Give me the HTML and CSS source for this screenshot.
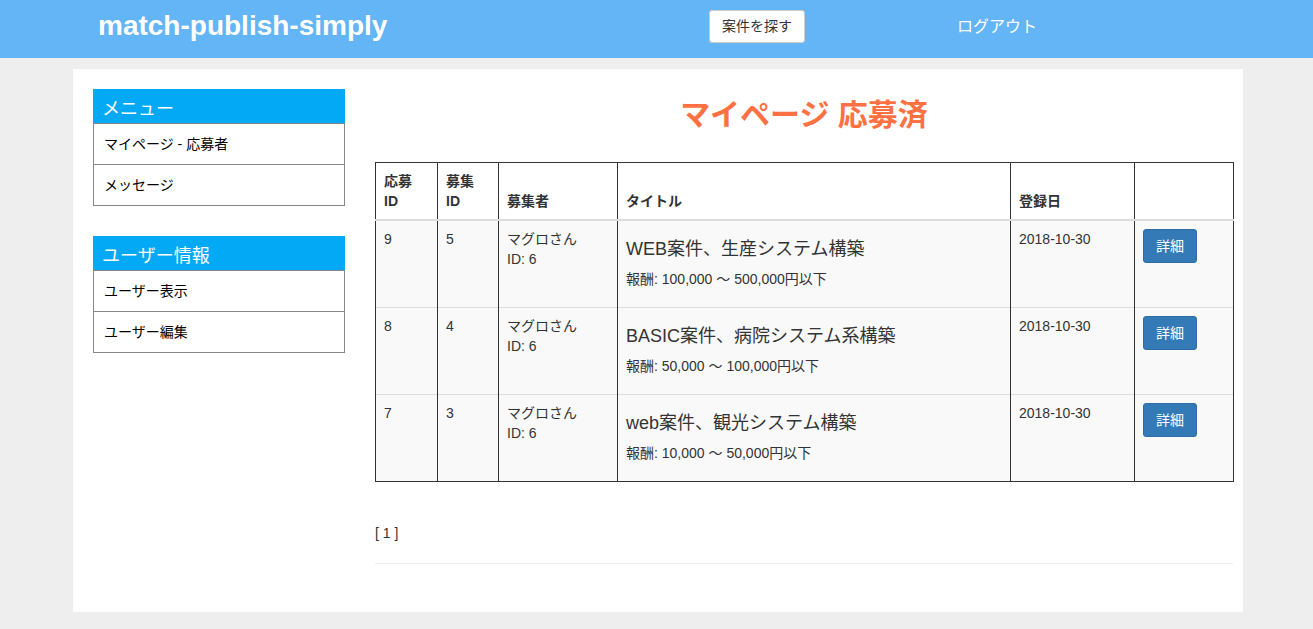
FILE: index.html
```html
<!DOCTYPE html>
<html lang="ja">
<head>
<meta charset="utf-8">
<title>match-publish-simply</title>
<link rel="stylesheet" href="styles.css">
</head>
<body>
<header class="topbar">
  <div class="brand">match-publish-simply</div>
  <div class="nav">
    <a class="btn-search" href="#">案件を探す</a>
    <a class="logout" href="#">ログアウト</a>
  </div>
</header>
<div class="panel">
  <aside class="sidebar">
    <div class="box">
      <div class="box-head">メニュー</div>
      <a class="box-item" href="#">マイページ - 応募者</a>
      <a class="box-item" href="#">メッセージ</a>
    </div>
    <div class="box">
      <div class="box-head">ユーザー情報</div>
      <a class="box-item" href="#">ユーザー表示</a>
      <a class="box-item" href="#">ユーザー編集</a>
    </div>
  </aside>
  <main class="content">
    <h1 class="page-title">マイページ 応募済</h1>
    <table class="list">
      <colgroup>
        <col class="c1"><col class="c2"><col class="c3"><col class="c4"><col class="c5"><col class="c6">
      </colgroup>
      <thead>
        <tr><th>応募<br>ID</th><th>募集<br>ID</th><th>募集者</th><th>タイトル</th><th>登録日</th><th></th></tr>
      </thead>
      <tbody>
        <tr>
          <td>9</td><td>5</td>
          <td>マグロさん<br>ID: 6</td>
          <td><h4 class="job">WEB案件、生産システム構築</h4><p class="pay">報酬: 100,000 〜 500,000円以下</p></td>
          <td>2018-10-30</td>
          <td><a class="btn-detail" href="#">詳細</a></td>
        </tr>
        <tr>
          <td>8</td><td>4</td>
          <td>マグロさん<br>ID: 6</td>
          <td><h4 class="job">BASIC案件、病院システム系構築</h4><p class="pay">報酬: 50,000 〜 100,000円以下</p></td>
          <td>2018-10-30</td>
          <td><a class="btn-detail" href="#">詳細</a></td>
        </tr>
        <tr>
          <td>7</td><td>3</td>
          <td>マグロさん<br>ID: 6</td>
          <td><h4 class="job">web案件、観光システム構築</h4><p class="pay">報酬: 10,000 〜 50,000円以下</p></td>
          <td>2018-10-30</td>
          <td><a class="btn-detail" href="#">詳細</a></td>
        </tr>
      </tbody>
    </table>
    <div class="pager">[ 1 ]</div>
    <hr class="rule">
  </main>
</div>
</body>
</html>
```
FILE: styles.css
```css
* { box-sizing: border-box; }
html, body { margin: 0; padding: 0; }
body {
  background: #eeeeee;
  font-family: "Liberation Sans", Arial, "Noto Sans CJK JP", sans-serif;
  font-size: 14px;
  line-height: 20px;
  color: #333;
}
a { text-decoration: none; }

.topbar {
  height: 58px;
  background: #64b5f6;
  display: flex;
  align-items: center;
  padding-left: 98px;
}
.brand {
  color: #fff;
  font-weight: bold;
  font-size: 28px;
  line-height: 32px;
  width: 611px;
  margin-top: -6px;
}
.nav {
  display: flex;
  align-items: center;
  margin-top: -5px;
}
.btn-search {
  display: inline-block;
  background: #fff;
  color: #333;
  border: 1px solid #ccc;
  border-radius: 3px;
  padding: 6px 12px;
  font-size: 14px;
  line-height: 19px;
}
.logout {
  color: #fff;
  font-size: 16px;
  margin-left: 152px;
  margin-top: 0;
}

.panel {
  width: 1170px;
  margin: 11px 0 0 73px;
  background: #fff;
  padding: 20px 10px 20px 20px;
  display: flex;
  gap: 30px;
  min-height: 543px;
}
.sidebar {
  width: 252px;
  flex: none;
  display: flex;
  flex-direction: column;
  gap: 30px;
}
.box {
  border: 1px solid #888;
  border-top: none;
}
.box-head {
  background: #03a9f4;
  color: #fff;
  font-size: 18px;
  line-height: 34px;
  height: 34px;
  padding: 3px 0 0 9px;
  margin: 0 -1px;
}
.box-item {
  display: block;
  color: #000;
  padding: 10px 10px;
  line-height: 20px;
  border-top: 1px solid #888;
}

.content {
  flex: 1;
  min-width: 0;
}
.page-title {
  color: #ff7043;
  text-align: center;
  font-size: 30px;
  line-height: 32px;
  font-weight: bold;
  margin: 10px 0 31px;
}
.list {
  width: 100%;
  border-collapse: collapse;
  table-layout: fixed;
  border: 1px solid #333;
}
.c1 { width: 62px; }
.c2 { width: 61px; }
.c3 { width: 119px; }
.c4 { width: 393px; }
.c5 { width: 124px; }
.c6 { width: 99px; }
.list th, .list td {
  border-left: 1px solid #333;
  border-right: 1px solid #333;
  padding: 8px;
  text-align: left;
}
.list th {
  vertical-align: bottom;
  font-weight: bold;
  border-bottom: 2px solid #ddd;
  line-height: 20px;
}
.list td {
  vertical-align: top;
  background: #f9f9f9;
  border-top: 1px solid #ddd;
}
.list tbody tr:last-child td { border-bottom: 1px solid #333; }
.job {
  font-size: 18px;
  font-weight: normal;
  line-height: 20px;
  margin: 10px 0 10px;
}
.pay {
  font-size: 14px;
  line-height: 20px;
  margin: 0 0 10px;
}
.btn-detail {
  display: inline-block;
  background: #337ab7;
  border: 1px solid #2e6da4;
  color: #fff;
  border-radius: 3px;
  padding: 7px 12px 6px;
  line-height: 19px;
  font-size: 14px;
}
.pager {
  margin-top: 41px;
  line-height: 20px;
}
.rule {
  border: none;
  border-top: 1px solid #eee;
  margin: 20px 0 0;
}
```
